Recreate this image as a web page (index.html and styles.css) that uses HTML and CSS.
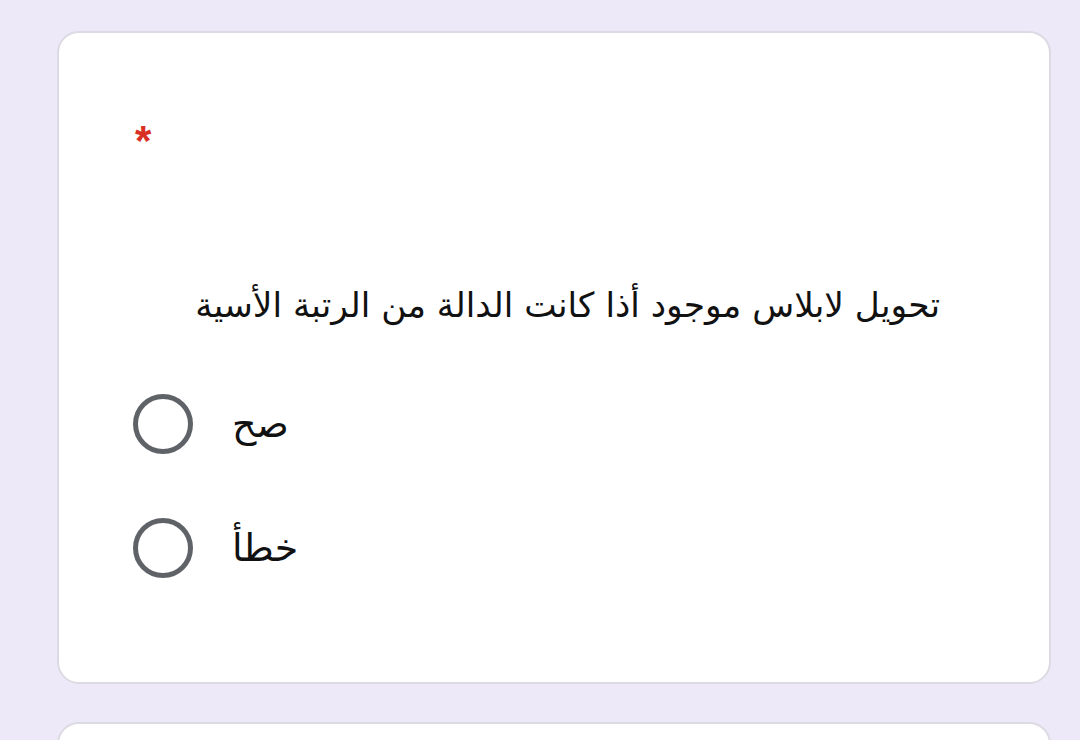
FILE: index.html
```html
<!DOCTYPE html>
<html lang="ar">
<head>
<meta charset="utf-8">
<link rel="stylesheet" href="styles.css">
</head>
<body>
<div class="page">
  <div class="card">
    <div class="req">*</div>
    <div class="question" dir="rtl">تحويل لابلاس موجود أذا كانت الدالة من الرتبة الأسية</div>
    <div class="options">
      <label class="option"><span class="radio"></span><span class="label" dir="rtl">صح</span></label>
      <label class="option"><span class="radio"></span><span class="label" dir="rtl">خطأ</span></label>
    </div>
  </div>
  <div class="card next"></div>
</div>
</body>
</html>
```
FILE: styles.css
```css
html, body {
  margin: 0;
  padding: 0;
  background: #ede9f8;
}
body {
  font-family: "DejaVu Sans", "Liberation Sans", sans-serif;
  color: #202124;
}
.page {
  width: 1080px;
  height: 740px;
  overflow: hidden;
  padding: 31px 29px 0 57px;
  box-sizing: border-box;
  display: flex;
  flex-direction: column;
  gap: 38px;
}
.card {
  background: #fff;
  border: 2px solid #dcdae2;
  border-radius: 22px;
  box-sizing: border-box;
  height: 653px;
  padding: 93px 109px 0 74px;
  flex-shrink: 0;
}
.req {
  color: #d93025;
  font-family: "Liberation Sans", sans-serif;
  font-weight: bold;
  font-size: 42px;
  line-height: 30px;
  height: 30px;
  margin-left: 2px;
}
.question {
  margin-top: 129px;
  font-size: 34.4px;
  line-height: 40px;
  text-align: right;
  color: #111;
}
.options {
  margin-top: 69px;
  display: flex;
  flex-direction: column;
  gap: 64px;
}
.option {
  display: flex;
  align-items: center;
  gap: 39px;
}
.radio {
  width: 60px;
  height: 60px;
  border: 5px solid #5f6368;
  border-radius: 50%;
  box-sizing: border-box;
  flex-shrink: 0;
}
.label {
  font-size: 38px;
  line-height: 40px;
  color: #111;
}
```
